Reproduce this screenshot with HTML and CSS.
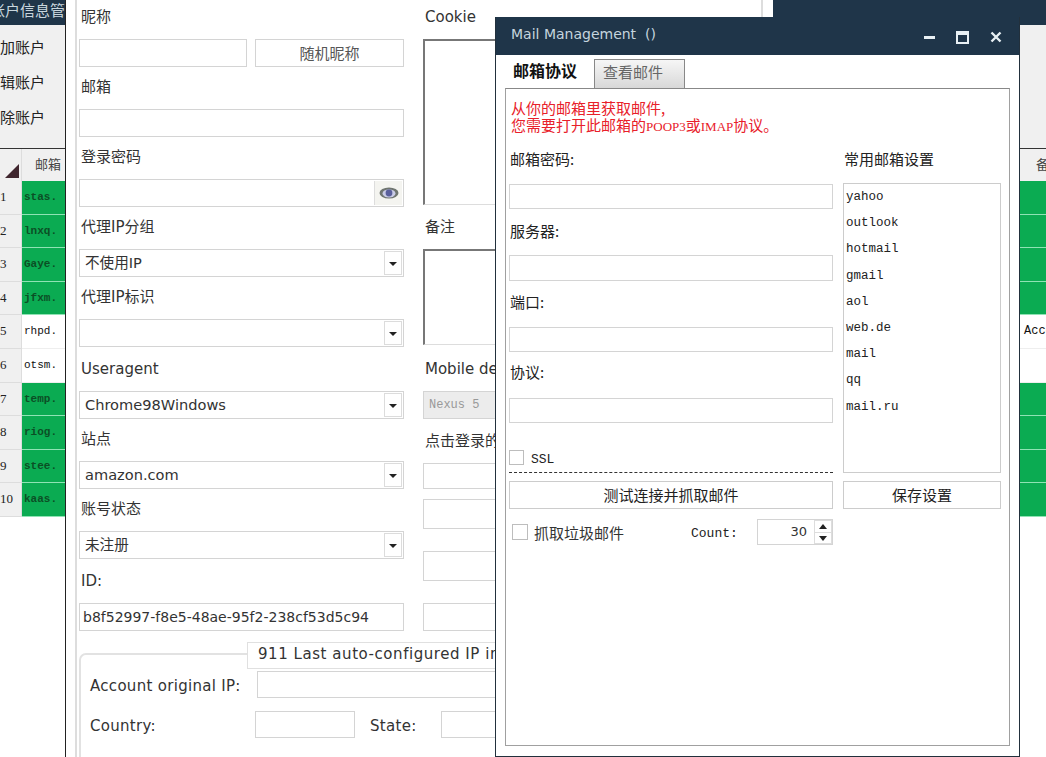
FILE: index.html
```html
<!DOCTYPE html>
<html lang="zh">
<head>
<meta charset="utf-8">
<title>Mail Management</title>
<link rel="stylesheet" href="styles.css">
</head>
<body>
<div class="desktop">

  <section class="win-back">
    <header class="back-title">账户信息管理</header>
    <div class="back-tools">
      <div class="tool">添加账户</div>
      <div class="tool">编辑账户</div>
      <div class="tool">删除账户</div>
    </div>
    <div class="table">
      <div class="thead">
        <div class="th th-num"><span class="sort"></span></div>
        <div class="th th-mail">邮箱</div>
        <div class="th th-note">备注</div>
      </div>
      <div class="tr ok"><div class="num">1</div><div class="mail">stas.</div><div class="note"></div></div>
      <div class="tr ok"><div class="num">2</div><div class="mail">lnxq.</div><div class="note"></div></div>
      <div class="tr ok"><div class="num">3</div><div class="mail">Gaye.</div><div class="note"></div></div>
      <div class="tr ok"><div class="num">4</div><div class="mail">jfxm.</div><div class="note"></div></div>
      <div class="tr"><div class="num">5</div><div class="mail">rhpd.</div><div class="note">Account</div></div>
      <div class="tr"><div class="num">6</div><div class="mail">otsm.</div><div class="note"></div></div>
      <div class="tr ok"><div class="num">7</div><div class="mail">temp.</div><div class="note"></div></div>
      <div class="tr ok"><div class="num">8</div><div class="mail">riog.</div><div class="note"></div></div>
      <div class="tr ok"><div class="num">9</div><div class="mail">stee.</div><div class="note"></div></div>
      <div class="tr ok"><div class="num">10</div><div class="mail">kaas.</div><div class="note"></div></div>
    </div>
  </section>

  <section class="win-form">
    <div class="form-panel">
      <div class="form-cols">
        <div class="col-a">
          <div class="lbl">昵称</div>
          <div class="nick-row">
            <input class="inp nick" type="text">
            <div class="btn rand">随机昵称</div>
          </div>
          <div class="lbl">邮箱</div>
          <input class="inp" type="text">
          <div class="lbl">登录密码</div>
          <div class="box">
            <span class="box-text"></span>
            <span class="eye">
              <svg width="20" height="14" viewBox="0 0 20 14">
                <ellipse cx="10" cy="7" rx="9.5" ry="5.5" fill="#6f7570"/>
                <ellipse cx="10" cy="7.4" rx="6.5" ry="4" fill="#c9cbe6"/>
                <circle cx="10" cy="7" r="3.4" fill="#5a5f9c"/>
              </svg>
            </span>
          </div>
          <div class="lbl">代理IP分组</div>
          <div class="box"><span class="box-text">不使用IP</span><span class="arrow"></span></div>
          <div class="lbl">代理IP标识</div>
          <div class="box"><span class="box-text"></span><span class="arrow"></span></div>
          <div class="lbl lbl-tall">Useragent</div>
          <div class="box"><span class="box-text">Chrome98Windows</span><span class="arrow"></span></div>
          <div class="lbl">站点</div>
          <div class="box"><span class="box-text">amazon.com</span><span class="arrow"></span></div>
          <div class="lbl">账号状态</div>
          <div class="box"><span class="box-text">未注册</span><span class="arrow"></span></div>
          <div class="lbl lbl-tall">ID:</div>
          <input class="inp inp-id" type="text" value="b8f52997-f8e5-48ae-95f2-238cf53d5c94">
        </div>
        <div class="col-b">
          <div class="lbl">Cookie</div>
          <div class="area area-cookie"></div>
          <div class="lbl lbl-tall">备注</div>
          <div class="area area-note"></div>
          <div class="lbl lbl-46">Mobile device</div>
          <div class="box box-off"><span class="box-text">Nexus 5</span></div>
          <div class="lbl lbl-tall">点击登录的</div>
          <input class="inp h26" type="text">
          <input class="inp h30 gap10" type="text">
          <input class="inp h30 gap22" type="text">
          <input class="inp gap22" type="text">
        </div>
      </div>
      <div class="group">
        <div class="legend">911 Last auto-configured IP info</div>
        <div class="g-row">
          <span class="g-lbl g-lbl-ip">Account original IP:</span>
          <input class="inp g-ip" type="text">
        </div>
        <div class="g-row">
          <span class="g-lbl g-lbl-country">Country:</span>
          <input class="inp g-small" type="text">
          <span class="g-lbl g-lbl-state">State:</span>
          <input class="inp g-small" type="text">
        </div>
      </div>
    </div>
  </section>

  <section class="win-mail">
    <header class="mail-title">
      <span class="mail-name">Mail Management&nbsp; ()</span>
      <span class="ctl ctl-min"></span>
      <span class="ctl ctl-max"></span>
      <svg class="ctl-x" width="12" height="12" viewBox="0 0 12 12"><path d="M1.5 1.5l9 9M10.5 1.5l-9 9" stroke="#e8f0f4" stroke-width="2.4"/></svg>
    </header>
    <div class="mail-body">
      <div class="tabs">
        <div class="tab tab-on">邮箱协议</div>
        <div class="tab tab-off">查看邮件</div>
      </div>
      <div class="pane">
        <div class="notice">从你的邮箱里获取邮件,<br>您需要打开此邮箱的<span class="latin">POOP3</span>或<span class="latin">IMAP</span>协议。</div>
        <div class="mail-cols">
          <div class="m-left">
            <div class="m-lbl m-lbl-first">邮箱密码:</div>
            <input class="inp m-inp" type="text">
            <div class="m-lbl">服务器:</div>
            <input class="inp m-inp m-inp-26" type="text">
            <div class="m-lbl m-lbl-up1">端口:</div>
            <input class="inp m-inp" type="text">
            <div class="m-lbl m-lbl-up2">协议:</div>
            <input class="inp m-inp" type="text">
            <label class="ssl"><input class="chk" type="checkbox"><span>SSL</span></label>
            <div class="dash"></div>
            <div class="btn m-btn">测试连接并抓取邮件</div>
            <div class="m-opts">
              <input class="chk chk-lg" type="checkbox">
              <span class="junk">抓取垃圾邮件</span>
              <span class="count">Count:</span>
              <div class="spin">
                <span class="spin-val">30</span>
                <span class="spin-btns"><i class="up"></i><i class="down"></i></span>
              </div>
            </div>
          </div>
          <div class="m-right">
            <div class="m-lbl m-lbl-first">常用邮箱设置</div>
            <ul class="list">
              <li>yahoo</li><li>outlook</li><li>hotmail</li><li>gmail</li><li>aol</li><li>web.de</li><li>mail</li><li>qq</li><li>mail.ru</li>
            </ul>
            <div class="btn m-btn">保存设置</div>
          </div>
        </div>
      </div>
    </div>
  </section>

</div>
</body>
</html>
```

FILE: styles.css
```css
* { box-sizing: border-box; }
html, body { margin: 0; padding: 0; background: #fff; }
body { font-family: "DejaVu Sans", "Noto Sans CJK SC", sans-serif; font-size: 15px; color: #333; }
.desktop { position: relative; width: 1046px; height: 757px; overflow: hidden; background: #fff; }

/* back window */
.win-back { position: absolute; left: -20px; top: 0; width: 1120px; height: 757px; background: #fff; font-family: "Noto Sans CJK SC", sans-serif; }
.back-title { height: 25px; background: #1f3549; color: #c9d6de; padding-left: 10px; line-height: 20px; }
.back-tools { height: 124px; background: #f0f0f0; padding: 5px 0 0 5px; border-bottom: 1px solid #333; }
.tool { height: 35px; line-height: 33px; color: #222; }
.thead { display: grid; grid-template-columns: 42px 1fr 80px; height: 32px; background: #f0f0f0; }
.th { line-height: 30px; font-size: 13px; color: #444; border-right: 1px solid #ddd; }
.th-num { position: relative; }
.sort { position: absolute; left: 25px; top: 15px; width: 0; height: 0; border-style: solid; border-width: 0 0 14px 14px; border-color: transparent transparent #40262e transparent; }
.th-mail { padding-left: 13px; }
.th-note { padding-left: 16px; border-right: 0; }
.tr { display: grid; grid-template-columns: 42px 1fr 80px; height: 33.6px; font-family: "Liberation Mono", monospace; font-size: 11px; color: #111; background: #fff; }
.num { background: #f0f0f0; border-bottom: 1px solid #ddd; border-right: 1px solid #ddd; padding-left: 20px; font-family: "Liberation Serif", serif; font-size: 13px; line-height: 32px; color: #222; }
.mail, .note { line-height: 32px; padding-left: 2px; border-bottom: 1px solid #eee; }
.note { padding-left: 4px; font-size: 12px; }
.ok .mail, .ok .note { background: #0bab52; color: #0b4f25; font-weight: 700; border-bottom-color: #8fe3b4; }

/* form window */
.win-form { position: absolute; left: 65px; top: -3px; width: 708px; height: 760px; background: #fff; border-left: 1px solid #222; padding-left: 9px; }
.form-panel { width: 688px; height: 100%; border-left: 2px solid #ddd; border-right: 2px solid #ddd; padding-left: 2px; }
.form-cols { display: grid; grid-template-columns: 325px 329px; column-gap: 19px; }
.col-a, .col-b { display: flex; flex-direction: column; }
.lbl { height: 42px; padding: 0 0 12px 2px; display: flex; align-items: flex-end; line-height: 20px; font-size: 15px; color: #333; white-space: nowrap; }
.lbl-tall { height: 44px; }
.lbl-46 { height: 46px; }
.inp { display: block; width: 100%; height: 28px; border: 1px solid #d4d4d4; background: #fff; padding: 0 3px; font: 14px "DejaVu Sans", sans-serif; color: #333; border-radius: 0; outline: 0; }
.inp-id { font-size: 14px; }
.h26 { height: 26px; }
.h30 { height: 30px; }
.gap10 { margin-top: 10px; }
.gap22 { margin-top: 22px; }
.nick-row { display: flex; justify-content: space-between; }
.nick { width: 168px; }
.btn { border: 1px solid #d4d4d4; background: #fff; text-align: center; color: #333; font-family: "Noto Sans CJK SC", sans-serif; }
.rand { width: 149px; height: 28px; line-height: 26px; font-size: 15px; color: #555; }
.box { display: flex; align-items: stretch; height: 28px; border: 1px solid #d4d4d4; padding: 1px; background: #fff; }
.box-text { flex: 1; padding-left: 4px; line-height: 24px; font-size: 14.6px; font-family: "DejaVu Sans", "Noto Sans CJK SC", sans-serif; color: #333; }
.arrow { width: 18px; border: 1px solid #dcdcdc; background: #fff; position: relative; }
.arrow::after { content: ""; position: absolute; left: 4px; top: 10px; border-style: solid; border-width: 4px 4px 0 4px; border-color: #222 transparent transparent transparent; }
.eye { width: 28px; background: #f4f4f0; border-left: 1px solid #ddd; display: flex; align-items: center; justify-content: center; }
.box-off { background: #ececec; }
.box-off .box-text { font: 12px "Liberation Mono", monospace; line-height: 24px; color: #999; }
.area { border: 2px solid #777; border-right: 0; border-bottom: 1px solid #ddd; background: #fff; }
.area-cookie { height: 166px; }
.area-note { height: 96px; }
.group { position: relative; margin-top: 22px; margin-right: 8px; border: 2px solid #e2e2e2; border-radius: 7px 0 0 0; padding: 16px 0 0 9px; height: 140px; }
.legend { position: absolute; left: 166px; top: -13px; width: 340px; height: 27px; padding-left: 10px; background: #fff; border: 1px solid #e0e0e0; line-height: 22px; font-size: 15px; white-space: nowrap; overflow: hidden; letter-spacing: .55px; }
.g-row { display: flex; align-items: center; height: 27px; margin-bottom: 13px; }
.g-lbl { padding-top: 3px; font-size: 15px; letter-spacing: .3px; white-space: nowrap; }
.g-lbl-ip { width: 167px; }
.g-lbl-country { width: 165px; }
.g-lbl-state { width: 71px; margin-left: 15px; }
.g-ip { width: 400px; height: 27px; }
.g-small { width: 100px; height: 27px; }

/* mail window */
.win-mail { position: absolute; left: 495px; top: 17px; width: 525px; height: 740px; background: #fff; border: solid #22303c; border-width: 0 1px 1px 1px; font-family: "Noto Sans CJK SC", sans-serif; }
.mail-title { display: flex; align-items: center; height: 38px; background: #1f3549; padding: 2px 17px 0 15px; color: #c5d4de; }
.mail-name { flex: 1; padding-bottom: 6px; font: 14px "DejaVu Sans", sans-serif; }
.ctl { display: block; }
.ctl-min { width: 11px; height: 3px; background: #e8f0f4; margin-right: 21px; }
.ctl-max { width: 13px; height: 13px; border: 2px solid #e8f0f4; border-top-width: 4px; margin-right: 21px; }
.ctl-x { display: block; }
.mail-body { padding-left: 9px; }
.tabs { display: flex; height: 33px; align-items: flex-end; }
.tab { height: 29px; font-size: 15px; line-height: 24px; }
.tab-on { width: 89px; padding-left: 8px; height: 33px; line-height: 30px; font-weight: 700; font-size: 16px; color: #111; }
.tab-off { width: 91px; padding-left: 8px; color: #666; border: 1px solid #888; border-bottom: 0; background: linear-gradient(#f6f6f6, #d8d8d8); }
.pane { width: 505px; height: 658px; border: 1px solid #a0a0a0; border-top-color: #888; padding: 10px 0 0 3px; }
.notice { height: 51px; padding-left: 2px; color: #e8202a; font: 15px/17px "Noto Sans CJK SC", sans-serif; }
.latin { font: 13px/17px "Liberation Serif", serif; }
.mail-cols { display: grid; grid-template-columns: 324px 158px; column-gap: 10px; }
.m-lbl { height: 46px; padding: 0 0 14px 1px; display: flex; align-items: flex-end; line-height: 20px; font-size: 15px; color: #222; }
.m-lbl-first { height: 34px; padding-bottom: 15px; }
.m-lbl-up1 { padding-bottom: 15px; }
.m-lbl-up2 { padding-bottom: 16px; }
.m-inp { height: 25px; }
.m-inp-26 { height: 26px; }
.ssl { display: flex; align-items: center; height: 15px; margin-top: 27px; font: 13px "Liberation Mono", monospace; color: #222; }
.ssl span { margin: 3px 0 0 7px; }
.chk { appearance: none; -webkit-appearance: none; display: block; width: 15px; height: 15px; margin: 0; border: 1px solid #bdbdbd; background: #fff; }
.chk-lg { width: 16px; height: 16px; margin-left: 3px; }
.dash { height: 0; margin-top: 7px; border-top: 1px dashed #333; }
.m-btn { height: 28px; margin-top: 8px; line-height: 26px; font-size: 15px; color: #222; border-color: #ccc; }
.m-opts { display: flex; align-items: center; height: 26px; margin-top: 10px; }
.junk { width: 157px; margin-left: 6px; font-size: 15px; }
.count { width: 66px; padding-top: 3px; font: 13px "Liberation Mono", monospace; color: #222; }
.spin { display: flex; width: 76px; height: 26px; border: 1px solid #d4d4d4; }
.spin-val { flex: 1; text-align: right; padding-right: 7px; font: 13px/23px "DejaVu Sans", sans-serif; }
.spin-btns { display: flex; flex-direction: column; width: 18px; border: 1px solid #ddd; }
.spin-btns i { position: relative; flex: 1; display: block; }
.up { border-bottom: 1px solid #ddd; }
.up::after, .down::after { content: ""; position: absolute; left: 4px; top: 3px; border-style: solid; border-color: transparent; }
.up::after { border-width: 0 4px 5px 4px; border-bottom-color: #222; }
.down::after { border-width: 5px 4px 0 4px; border-top-color: #222; }
.list { list-style: none; margin: -1px 0 0; padding: 0 0 0 2px; height: 290px; border: 1px solid #ccc; font: 12.5px "Liberation Mono", monospace; color: #222; }
.list li { height: 26.2px; line-height: 26px; }
```
